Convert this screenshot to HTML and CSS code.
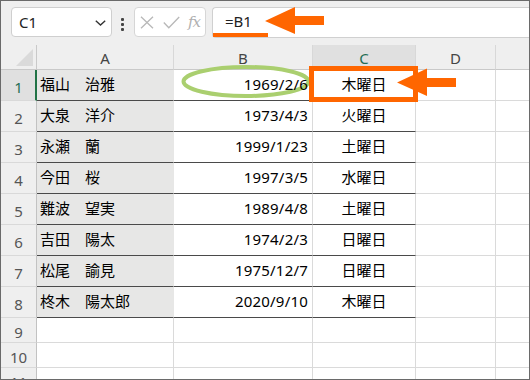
FILE: index.html
```html
<!DOCTYPE html>
<html lang="ja">
<head>
<meta charset="utf-8">
<link rel="stylesheet" href="styles.css">
</head>
<body>
<div class="stage">
  <div class="frame">
    <div class="fbar">
      <div class="namebox">
        <span class="ref">C1</span>
        <svg class="chev" width="11" height="6" viewBox="0 0 11 6"><path d="M0.8 0.8 L5.5 5 L10.2 0.8" fill="none" stroke="#333" stroke-width="1.4"/></svg>
      </div>
      <div class="dots"><i></i><i></i><i></i></div>
      <div class="fxbox">
        <svg width="14" height="13" viewBox="0 0 14 13"><path d="M1 0.8 L13 12.2 M13 0.8 L1 12.2" stroke="#b8b8b8" stroke-width="1.3" fill="none"/></svg>
        <svg width="17" height="13" viewBox="0 0 17 13"><path d="M0.8 6.5 L5.8 11.8 L16.2 1" stroke="#b8b8b8" stroke-width="1.3" fill="none"/></svg>
        <span class="fx">fx</span>
      </div>
      <div class="input">=B1</div>
    </div>
    <div class="sheet">
      <div class="ch corner"><span class="tri"></span></div>
      <div class="ch">A</div>
      <div class="ch">B</div>
      <div class="ch sel">C</div>
      <div class="ch">D</div>
      <div class="ch last"></div>

      <div class="rh sel">1</div>
      <div class="c name t">福山　治雅</div>
      <div class="c date t"><span class="v">1969/2/6</span></div>
      <div class="c day t">木曜日</div>
      <div class="c"></div><div class="c last"></div>

      <div class="rh">2</div>
      <div class="c name t">大泉　洋介</div>
      <div class="c date t"><span class="v">1973/4/3</span></div>
      <div class="c day t">火曜日</div>
      <div class="c"></div><div class="c last"></div>

      <div class="rh">3</div>
      <div class="c name t">永瀬　蘭</div>
      <div class="c date t"><span class="v">1999/1/23</span></div>
      <div class="c day t">土曜日</div>
      <div class="c"></div><div class="c last"></div>

      <div class="rh">4</div>
      <div class="c name t">今田　桜</div>
      <div class="c date t"><span class="v">1997/3/5</span></div>
      <div class="c day t">水曜日</div>
      <div class="c"></div><div class="c last"></div>

      <div class="rh">5</div>
      <div class="c name t">難波　望実</div>
      <div class="c date t"><span class="v">1989/4/8</span></div>
      <div class="c day t">土曜日</div>
      <div class="c"></div><div class="c last"></div>

      <div class="rh">6</div>
      <div class="c name t">吉田　陽太</div>
      <div class="c date t"><span class="v">1974/2/3</span></div>
      <div class="c day t">日曜日</div>
      <div class="c"></div><div class="c last"></div>

      <div class="rh">7</div>
      <div class="c name t">松尾　諭見</div>
      <div class="c date t"><span class="v">1975/12/7</span></div>
      <div class="c day t">日曜日</div>
      <div class="c"></div><div class="c last"></div>

      <div class="rh">8</div>
      <div class="c name t">柊木　陽太郎</div>
      <div class="c date t"><span class="v">2020/9/10</span></div>
      <div class="c day t">木曜日</div>
      <div class="c"></div><div class="c last"></div>

      <div class="rh">9</div>
      <div class="c"></div><div class="c"></div><div class="c"></div><div class="c"></div><div class="c last"></div>

      <div class="rh">10</div>
      <div class="c"></div><div class="c"></div><div class="c"></div><div class="c"></div><div class="c last"></div>

      <div class="rh">11</div>
      <div class="c"></div><div class="c"></div><div class="c"></div><div class="c"></div><div class="c last"></div>
    </div>
  </div>
  <svg class="annot" width="530" height="380" viewBox="0 0 530 380">
    <rect x="213" y="33" width="55" height="4" fill="#ff6600"/>
    <polygon points="265,21 295,7 295,16 324,16 324,25 295,25 295,34" fill="#ff6600"/>
    <ellipse cx="246" cy="81.5" rx="62.5" ry="14.5" fill="none" stroke="#aacf6f" stroke-width="4"/>
    <rect x="311.5" y="68.5" width="104" height="31" fill="none" stroke="#ff6600" stroke-width="5"/>
    <polygon points="397,82.5 427,68.5 427,78 456,78 456,87 427,87 427,96" fill="#ff6600"/>
  </svg>
</div>
</body>
</html>
```

FILE: styles.css
```css
* { box-sizing: border-box; }
html, body { margin: 0; padding: 0; background: #fff; }
body { font-family: "Noto Sans CJK JP", "Noto Sans", sans-serif; }

.stage { position: relative; width: 530px; height: 380px; overflow: hidden; }

.frame {
  width: 530px;
  height: 380px;
  border: 1px solid #6a6a6a;
  background: #efefef;
  overflow: hidden;
}

.fbar {
  display: flex;
  align-items: flex-start;
  height: 44px;
  padding: 6px 0 0 10px;
  background: #efefef;
}

.namebox {
  width: 101px;
  height: 30px;
  background: #fff;
  border: 1px solid #cfcfcf;
  border-radius: 4px;
  display: flex;
  align-items: center;
  justify-content: space-between;
  padding: 0 5px 0 7px;
}
.ref { font-family: "Noto Sans", "Liberation Sans", sans-serif; font-size: 15px; color: #222; line-height: 1; }
.chev { display: block; margin-top: 1px; }

.dots {
  margin: 11px 0 0 9px;
  width: 3px;
  display: flex;
  flex-direction: column;
  gap: 2px;
}
.dots i { display: block; width: 3px; height: 3px; background: #444; border-radius: 1px; }

.fxbox {
  margin-left: 10px;
  width: 72px;
  height: 30px;
  background: #fff;
  border: 1px solid #d6d6d6;
  border-radius: 4px;
  display: flex;
  align-items: center;
  padding: 0 0 0 5px;
  gap: 9px;
}
.fxbox svg { display: block; }
.fx {
  font-family: "DejaVu Serif", "Liberation Serif", serif;
  font-style: italic;
  font-size: 15px;
  color: #b0b0b0;
  line-height: 1;
  margin-left: -1px;
  letter-spacing: -1px;
}

.input {
  margin-left: 6px;
  flex: 1;
  height: 31px;
  background: #fff;
  border: 1px solid #d0d0d0;
  border-right: none;
  border-radius: 4px 0 0 4px;
  font-family: "Noto Sans", "Liberation Sans", sans-serif;
  font-size: 15px;
  color: #222;
  line-height: 27px;
  padding-left: 12px;
}

.sheet {
  display: grid;
  grid-template-columns: 36px 137px 139px 103px 80px 1fr;
  grid-template-rows: 25px repeat(8, 31px) 25px 25px 25px;
}

.ch {
  background: #efefef;
  border-right: 1px solid #d8d8d8;
  border-bottom: 1px solid #c9c9c9;
  font-family: "Noto Sans", "Liberation Sans", sans-serif;
  font-size: 15px;
  color: #444;
  display: flex;
  align-items: center;
  justify-content: center;
  padding-top: 1px;
}
.ch.sel { background: #e0e0e0; color: #1f6e55; }
.ch.corner { position: relative; border-right-color: #c9c9c9; }
.tri {
  position: absolute;
  right: 3px;
  bottom: 3px;
  width: 0;
  height: 0;
  border-left: 17px solid transparent;
  border-bottom: 17px solid #dadada;
}
.ch.last, .c.last { border-right: none; }

.rh {
  background: #efefef;
  border-right: 1px solid #c2c2c2;
  border-bottom: 1px solid #d9d9d9;
  font-family: "Noto Sans", "Liberation Sans", sans-serif;
  font-size: 15px;
  color: #555;
  display: flex;
  align-items: center;
  justify-content: center;
  padding-top: 4px;
}
.rh.sel {
  background: #e0e0e0;
  color: #1f6e55;
  border-right: 2px solid #217346;
  padding-left: 1px;
}

.c {
  background: #fff;
  border-right: 1px solid #dadada;
  border-bottom: 1px solid #dadada;
  font-size: 15px;
  color: #000;
  display: flex;
  align-items: center;
  white-space: nowrap;
  padding-bottom: 3px;
}
.c.t { border-bottom: 1px solid #4a4a4a; }
.c.name { background: #e7e7e6; border-right-color: #e7e7e6; padding-left: 3px; }
.c.date {
  justify-content: flex-end;
  padding-right: 4px;
  font-family: "Noto Sans", "Liberation Sans", sans-serif;
  letter-spacing: 0.2px;
}
.c.date .v { position: relative; z-index: 1; }
.c.day { justify-content: center; }

.annot { position: absolute; left: 0; top: 0; pointer-events: none; }
```
